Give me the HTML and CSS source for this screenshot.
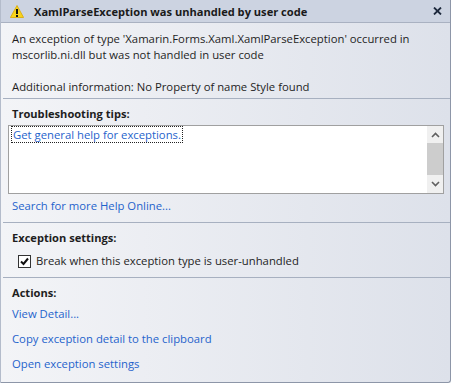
FILE: index.html
```html
<!DOCTYPE html>
<html lang="en">
<head>
    <meta charset="UTF-8">
    <title>XamlParseException was unhandled by user code</title>
    <link rel="stylesheet" href="styles.css">
</head>
<body>
    <div class="dialog">
        <!-- Title bar -->
        <div class="titlebar">
            <svg class="warn-icon" width="14" height="13" viewBox="0 0 14 13">
                <path d="M7 0.5 L13.6 12.5 L0.4 12.5 Z" fill="#f8d31c" stroke="#d9a800" stroke-width="0.8" stroke-linejoin="round"/>
                <rect x="6" y="4" width="2" height="5" fill="#111"/>
                <rect x="6" y="10" width="2" height="2" fill="#111"/>
            </svg>
            <span class="title">XamlParseException was unhandled by user code</span>
            <svg class="close-icon" width="9" height="8" viewBox="0 0 9 8">
                <path d="M1 0.5 L8 7.5 M8 0.5 L1 7.5" stroke="#1e2a3e" stroke-width="1.8"/>
            </svg>
        </div>

        <!-- Message -->
        <div class="section message">
            <p>An exception of type 'Xamarin.Forms.Xaml.XamlParseException' occurred in mscorlib.ni.dll but was not handled in user code</p>
            <p>Additional information: No Property of name Style found</p>
        </div>

        <!-- Troubleshooting tips -->
        <div class="section tips">
            <h3 class="section-title">Troubleshooting tips:</h3>
            <div class="tips-box">
                <div class="tips-list">
                    <a href="#" class="link focused">Get general help for exceptions.</a>
                </div>
                <div class="scrollbar">
                    <svg class="arrow" width="9" height="6" viewBox="0 0 9 6"><path d="M1 5 L4.5 1.5 L8 5" fill="none" stroke="#606060" stroke-width="1.6"/></svg>
                    <div class="track"><div class="thumb"></div></div>
                    <svg class="arrow" width="9" height="6" viewBox="0 0 9 6"><path d="M1 1 L4.5 4.5 L8 1" fill="none" stroke="#606060" stroke-width="1.6"/></svg>
                </div>
            </div>
            <a href="#" class="link">Search for more Help Online...</a>
        </div>

        <!-- Exception settings -->
        <div class="section settings">
            <h3 class="section-title">Exception settings:</h3>
            <label class="check-row">
                <span class="checkbox">
                    <svg width="11" height="11" viewBox="0 0 11 11"><path d="M2 5.5 L4.5 8 L9 2.5" fill="none" stroke="#111" stroke-width="2"/></svg>
                </span>
                Break when this exception type is user-unhandled
            </label>
        </div>

        <!-- Actions -->
        <div class="section actions">
            <h3 class="section-title">Actions:</h3>
            <a href="#" class="link">View Detail...</a>
            <a href="#" class="link">Copy exception detail to the clipboard</a>
            <a href="#" class="link">Open exception settings</a>
        </div>
    </div>
</body>
</html>
```

FILE: styles.css
```css
/* General styles */
body {
    margin: 0;
    padding: 0;
    font-family: 'Open Sans', 'Noto Sans', sans-serif;
    font-size: 11.3px;
    color: #1e1e1e;
    background: #ffffff;
}

.dialog {
    width: 451px;
    height: 383px;
    box-sizing: border-box;
    border-left: 1px solid #b4bccb;
    border-right: 1px solid #8d96a8;
    border-bottom: 1px solid #8d96a8;
    border-bottom-right-radius: 3px;
    background: linear-gradient(90deg, #f3f4f7, #dde1ea);
    overflow: hidden;
}

/* Title bar */
.titlebar {
    height: 22px;
    display: flex;
    align-items: center;
    background: #ccd3e1;
    border-bottom: 1px solid #a9b1c1;
    padding: 0 7px 0 9px;
}

.warn-icon {
    margin-right: 10px;
}

.title {
    flex: 1;
    font-weight: bold;
    font-size: 11.1px;
    color: #1a1a1a;
}

.close-icon {
    margin-right: 1px;
}

/* Sections */
.section {
    display: flex;
    flex-direction: column;
    align-items: flex-start;
    padding: 0 0 0 11px;
    line-height: 16px;
}

.section + .section {
    border-top: 1px solid #a7b0c0;
    margin-left: 2px;
    padding-left: 9px;
}

.message {
    padding-top: 8px;
    padding-bottom: 3px;
    padding-right: 20px;
}

.message p {
    margin: 0 0 16px 0;
}

.message p:last-child {
    margin-bottom: 0;
}

.section-title {
    margin: 0;
    font-size: 11.1px;
    font-weight: bold;
    line-height: 16px;
}

/* Troubleshooting tips */
.tips {
    padding-top: 7px;
    padding-bottom: 8px;
}

.tips-box {
    align-self: stretch;
    display: flex;
    height: 69px;
    box-sizing: border-box;
    margin: 3px 6px 4px -4px;
    border: 1px solid #a0a0a0;
    background: #ffffff;
}

.tips-list {
    flex: 1;
    padding: 1px 3px;
}

.scrollbar {
    width: 16px;
    display: flex;
    flex-direction: column;
    align-items: center;
    background: #f0f0f0;
}

.scrollbar .arrow {
    margin: 6px 0;
}

.track {
    flex: 1;
    align-self: stretch;
}

.thumb {
    height: 32px;
    margin-top: -1px;
    background: #cdcdcd;
}

.link {
    color: #1f63cc;
    text-decoration: none;
}

.focused {
    outline: 1px dotted #222;
    outline-offset: 0;
    padding: 0 1px;
}

/* Exception settings */
.settings {
    padding-top: 7px;
    padding-bottom: 8px;
}

.check-row {
    display: flex;
    align-items: center;
    margin-top: 7px;
    padding-left: 6px;
}

.checkbox {
    width: 11px;
    height: 11px;
    border: 1px solid #333;
    background: #ffffff;
    margin-right: 5px;
    display: flex;
}

/* Actions */
.actions {
    padding-top: 7px;
    gap: 9px;
}

.actions .section-title {
    margin-bottom: -4px;
}
```
